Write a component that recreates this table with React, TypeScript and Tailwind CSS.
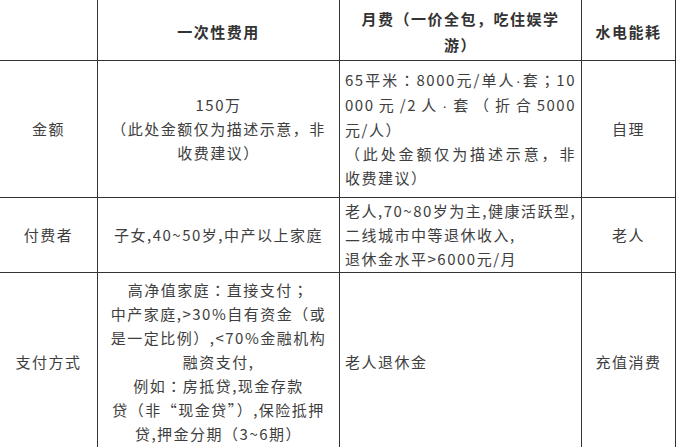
// centred full-width colon / semicolon, as the reference font draws them
function Mid({ children }: { children: string }) {
  return <span className="font-['Noto_Sans_CJK_TC',sans-serif]">{children}</span>;
}

// narrow middle dot
function Dot() {
  return <span className="font-['Liberation_Sans',sans-serif]">·</span>;
}

export default function App() {
  return (
    <div className="w-[677px] h-[447px] overflow-hidden bg-white">
      <div className="-ml-px -mt-px grid w-[677px] grid-cols-[97px_241px_241px_93px] grid-rows-[60px_136px_74px_177px] gap-px border border-[#333] bg-[#333] font-['Noto_Sans_CJK_SC','Noto_Sans',sans-serif] text-[15px] leading-6 tracking-[1.5px] text-[#3e3e3e]">
        {/* header */}
        <div className="bg-white" />
        <div className="flex flex-col items-center justify-center bg-white pt-[3px] font-bold text-[#333]">
          一次性费用
        </div>
        <div className="flex flex-col items-center justify-center bg-white pt-[3px] font-bold leading-[26px] text-[#333]">
          <div className="whitespace-nowrap">月费（一价全包，吃住娱学</div>
          <div className="whitespace-nowrap">游）</div>
        </div>
        <div className="flex flex-col items-center justify-center bg-white pt-[3px] font-bold text-[#333]">
          水电能耗
        </div>

        {/* 金额 */}
        <div className="flex items-center justify-center bg-white">金额</div>
        <div className="flex flex-col items-center justify-center bg-white text-center">
          <div className="whitespace-nowrap">150万</div>
          <div className="whitespace-nowrap">（此处金额仅为描述示意，非</div>
          <div className="whitespace-nowrap">收费建议）</div>
        </div>
        <div className="flex flex-col justify-center bg-white px-[5px]">
          <div className="whitespace-nowrap text-justify [text-align-last:justify]">
            65平米<Mid>：</Mid>8000元/单人<Dot />套<Mid>；</Mid>10
          </div>
          <div className="whitespace-nowrap text-justify [text-align-last:justify]">
            000元/2人<Dot />套（折合5000
          </div>
          <div className="whitespace-nowrap">元/人）</div>
          <div className="whitespace-nowrap text-justify [text-align-last:justify]">（此处金额仅为描述示意，非</div>
          <div className="whitespace-nowrap">收费建议）</div>
        </div>
        <div className="flex items-center justify-center bg-white">自理</div>

        {/* 付费者 */}
        <div className="flex items-center justify-center bg-white">付费者</div>
        <div className="flex items-center justify-center bg-white whitespace-nowrap">
          子女,40~50岁,中产以上家庭
        </div>
        <div className="flex flex-col justify-center bg-white px-[5px]">
          <div className="whitespace-nowrap">老人,70~80岁为主,健康活跃型,</div>
          <div className="whitespace-nowrap">二线城市中等退休收入,</div>
          <div className="whitespace-nowrap">退休金水平&gt;6000元/月</div>
        </div>
        <div className="flex items-center justify-center bg-white">老人</div>

        {/* 支付方式 */}
        <div className="flex items-center justify-center bg-white">支付方式</div>
        <div className="flex flex-col items-center justify-center bg-white text-center">
          <div className="whitespace-nowrap">
            高净值家庭<Mid>：</Mid>直接支付<Mid>；</Mid>
          </div>
          <div className="whitespace-nowrap">中产家庭,&gt;30%自有资金（或</div>
          <div className="whitespace-nowrap">是一定比例）,&lt;70%金融机构</div>
          <div className="whitespace-nowrap">融资支付,</div>
          <div className="whitespace-nowrap">
            例如<Mid>：</Mid>房抵贷,现金存款
          </div>
          <div className="whitespace-nowrap">贷（非“现金贷”）,保险抵押</div>
          <div className="whitespace-nowrap">贷,押金分期（3~6期）</div>
        </div>
        <div className="flex items-center bg-white px-[5px]">老人退休金</div>
        <div className="flex items-center justify-center bg-white">充值消费</div>
      </div>
    </div>
  );
}
